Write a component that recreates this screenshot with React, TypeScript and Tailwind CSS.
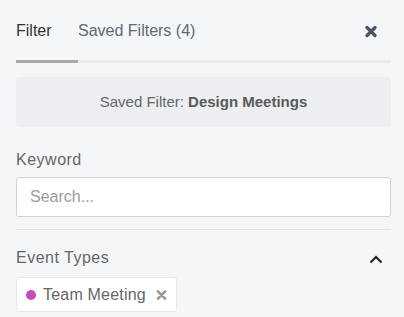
import React from "react";

export default function App() {
  return (
    <div className="w-[404px] h-[317px] overflow-hidden bg-[#f5f6f8] pl-4 pr-[13px] pt-[22px] font-['Liberation_Sans',Arial,sans-serif]">
      {/* Tabs */}
      <div className="flex items-start h-[38px]">
        <div className="w-[62px] text-[16px] leading-[18px] text-[#333]">Filter</div>
        <div className="text-[16px] leading-[18px] text-[#606875]">Saved Filters (4)</div>
        <div className="ml-auto mr-[14px] mt-[3px]">
          <svg width="12" height="13" viewBox="0 0 12 13">
            <path d="M2 2.5 L10 10.5 M10 2.5 L2 10.5" stroke="#4b5263" strokeWidth="3.2" strokeLinecap="round" />
          </svg>
        </div>
      </div>
      <div className="flex h-[3px] bg-[#e9ecef]">
        <div className="w-[62px] bg-[#a9a9a9]" />
      </div>

      {/* Saved filter box */}
      <div className="mt-[14px] h-[50px] rounded-[4px] bg-[#eceef1] flex items-center justify-center text-[15px] text-[#666]">
        <span>
          Saved Filter: <span className="font-bold text-[#5a5a5a]">Design Meetings</span>
        </span>
      </div>

      {/* Keyword */}
      <div className="mt-[23px] text-[16px] leading-[20px] tracking-[0.5px] text-[#666]">Keyword</div>
      <div className="mt-[7px] h-[40px] rounded-[3px] border border-[#cad4df] bg-white flex items-center pl-[13px] text-[16px] text-[#9b9b9b]">
        Search...
      </div>
      <div className="mt-[12px] h-px bg-[#e1e4e8]" />

      {/* Event types */}
      <div className="mt-[18px] flex items-center justify-between">
        <div className="text-[16px] leading-[20px] tracking-[0.5px] text-[#666]">Event Types</div>
        <svg className="mr-[8px] mt-[2px]" width="14" height="9" viewBox="0 0 14 9">
          <path d="M1.5 7.5 L7 2 L12.5 7.5" stroke="#222" strokeWidth="2" fill="none" />
        </svg>
      </div>
      <div className="mt-[9px] inline-flex items-center h-[35px] rounded-[3px] border border-[#e6e8eb] bg-white pl-[9px] pr-[9px]">
        <span className="w-[10px] h-[10px] rounded-full bg-[#c94bb8]" />
        <span className="ml-[7px] text-[16px] tracking-[0.2px] text-[#666]">Team Meeting</span>
        <svg className="ml-[10px]" width="11" height="10" viewBox="0 0 11 10">
          <path d="M2 1.5 L9 8.5 M9 1.5 L2 8.5" stroke="#9a9a9a" strokeWidth="2.6" strokeLinecap="round" />
        </svg>
      </div>
    </div>
  );
}
